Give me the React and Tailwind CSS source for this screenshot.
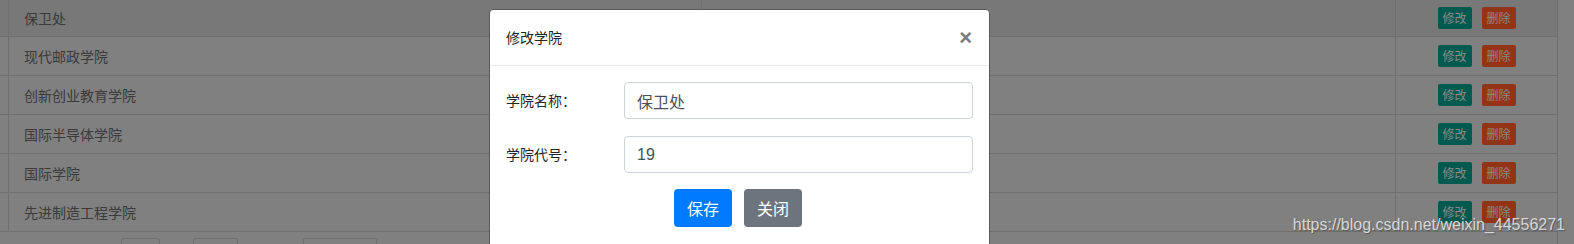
import React from 'react';

const rows = ['保卫处', '现代邮政学院', '创新创业教育学院', '国际半导体学院', '国际学院', '先进制造工程学院'];

const cjk = { fontFamily: '"Noto Sans CJK SC", "Noto Sans", sans-serif' };

export default function App() {
  return (
    <div className="relative w-[1574px] h-[244px] overflow-hidden bg-[#808080]" style={cjk}>
      {/* dimmed table behind the backdrop */}
      <div className="flex">
        <div className="w-[1558px] border-r border-[#6f6f6f]">
          {rows.map((name, i) => (
            <div
              key={i}
              className={`flex border-b border-[#6f6f6f] ${i === 0 ? 'h-[37px] bg-[#787878]' : 'h-[39px]'}`}
            >
              <div className="w-[9px] border-r border-[#6f6f6f]" />
              <div className="w-[693px] border-r border-[#6f6f6f] flex items-center pl-[15px] text-[14px] text-[#3a3a3a]">
                {name}
              </div>
              <div className="w-[694px] border-r border-[#6f6f6f]" />
              <div className="flex-1 flex items-center justify-center gap-[10px]">
                <span className="w-[34px] h-[22px] rounded-[2px] bg-[#005a50] text-[#8a8a8a] text-[12px] flex items-center justify-center">修改</span>
                <span className="w-[34px] h-[22px] rounded-[2px] bg-[#943417] text-[#8a8a8a] text-[12px] flex items-center justify-center">删除</span>
              </div>
            </div>
          ))}
          <div className="flex pt-[6px] pl-[121px]">
            <div className="w-[39px] h-[12px] border border-[#6f6f6f] rounded-[2px]" />
            <div className="w-[45px] h-[12px] border border-[#6f6f6f] rounded-[2px] ml-[33px]" />
            <div className="w-[74px] h-[12px] border border-[#6f6f6f] rounded-[2px] ml-[65px]" />
          </div>
        </div>
      </div>

      {/* modal */}
      <div className="absolute left-[489px] top-[9px] w-[501px] h-[260px] bg-white rounded-[4px] border border-[#5a5a5a]">
        <div className="h-[56px] border-b border-[#e9ecef] flex items-center justify-between pl-[16px] pr-[17px]">
          <span className="text-[14px] text-[#212529]">修改学院</span>
          <span className="text-[22px] font-bold text-[#7a7a7a] leading-none" style={{ fontFamily: '"Liberation Sans", Arial, sans-serif' }}>×</span>
        </div>
        <div className="pt-[16px] px-[16px]">
          <div className="flex items-center h-[37px]">
            <label className="w-[118px] text-[14px] text-[#212529]">学院名称：</label>
            <div className="w-[349px] h-[37px] border border-[#ced4da] rounded-[4px] flex items-center pl-[12px] text-[16px] text-[#495057]">保卫处</div>
          </div>
          <div className="flex items-center h-[37px] mt-[17px]">
            <label className="w-[118px] text-[14px] text-[#212529]">学院代号：</label>
            <div className="w-[349px] h-[37px] border border-[#ced4da] rounded-[4px] flex items-center pl-[12px] text-[16px] text-[#495057]" style={{ fontFamily: '"Liberation Sans", Arial, sans-serif' }}>19</div>
          </div>
          <div className="flex justify-center gap-[12px] mt-[16px] pr-[3px]">
            <button className="w-[58px] h-[38px] rounded-[4px] bg-[#007bff] text-white text-[16px]">保存</button>
            <button className="w-[58px] h-[38px] rounded-[4px] bg-[#6c757d] text-white text-[16px]">关闭</button>
          </div>
        </div>
      </div>

      {/* watermark */}
      <div
        className="absolute right-[9px] top-[213px] text-[16px] text-[#d8d8d8] whitespace-nowrap"
        style={{ fontFamily: '"Liberation Sans", Arial, sans-serif', textShadow: '1px 1px 1px #555' }}
      >
        https://blog.csdn.net/weixin_44556271
      </div>
    </div>
  );
}
